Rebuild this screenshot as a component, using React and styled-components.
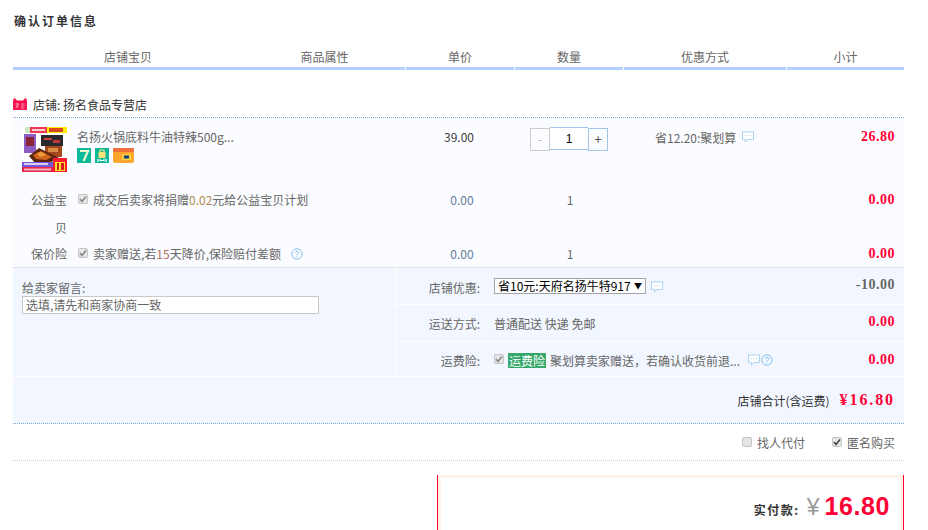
import React from 'react'
import styled, { createGlobalStyle } from 'styled-components'

const Global = createGlobalStyle`
  html, body { margin: 0; padding: 0; background: #fff; }
  body {
    font-family: "Noto Sans CJK SC", "Liberation Sans", sans-serif;
    font-size: 12px;
    color: #666;
    overflow: hidden;
  }
`

const Page = styled.div`
  width: 891px;
  height: 530px;
  margin-left: 13px;
  overflow: hidden;
`
const Title = styled.h2`
  margin: 0;
  height: 44px;
  padding: 13px 0 0 1px;
  box-sizing: border-box;
  font-size: 12px;
  line-height: 16px;
  letter-spacing: 2px;
  font-weight: 700;
  color: #333;
`
const Head = styled.div`
  display: grid;
  grid-template-columns: 227px 164px 108px 108px 162px 117px;
  column-gap: 1px;
  height: 26px;
`
const HeadCell = styled.div`
  text-align: center;
  height: 23px;
  padding-left: ${p => p.$shift || 0}px;
  line-height: 26px;
  font-size: 12px;
  color: #666;
  border-bottom: 3px solid #b2d1ff;
  margin-right: ${p => (p.$joined ? '-1px' : '0')};
`
const ShopRow = styled.div`
  display: flex;
  align-items: center;
  gap: 6px;
  height: 22px;
  margin-top: 23px;
  padding-bottom: 2px;
  border-bottom: 1px dotted #80a5dc;
  color: #333;
  font-size: 12px;
`
const ItemRow = styled.div`
  display: grid;
  grid-template-columns: 392px 108px 110px 162px 119px;
  height: 65px;
  background: #fbfcff;
`
const ItemMain = styled.div`
  display: flex;
  gap: 10px;
  padding: 9px 0 0 9px;
`
const ItemInfo = styled.div`
  display: flex;
  flex-direction: column;
  gap: 2px;
  padding-top: 1px;
`
const ItemName = styled.div`
  line-height: 18px;
  color: #666;
`
const Badges = styled.div`
  display: flex;
  gap: 4px;
`
const PriceCell = styled.div`
  text-align: center;
  padding-top: 10px;
  line-height: 18px;
  color: #3c3c3c;
`
const Stepper = styled.div`
  display: flex;
  justify-content: center;
  align-items: flex-start;
  padding: 9px 0 0 2px;
`
const StepBtn = styled.div`
  width: 20px;
  height: 23px;
  margin-top: 1px;
  box-sizing: border-box;
  border: 1px solid ${p => (p.$off ? '#ccc' : '#a0c4e8')};
  color: ${p => (p.$off ? '#bbb' : '#555')};
  text-align: center;
  line-height: 20px;
  font-size: 13px;
`
const StepValue = styled.div`
  width: 38px;
  height: 23px;
  box-sizing: border-box;
  border-top: 1px solid #a0c4e8;
  border-bottom: 1px solid #a0c4e8;
  background: #fff;
  color: #000;
  text-align: center;
  line-height: 22px;
  font-family: "Liberation Sans", sans-serif;
  font-size: 12px;
`
const PromoCell = styled.div`
  display: flex;
  align-items: center;
  gap: 6px;
  height: 18px;
  margin-top: 10px;
  padding-left: 32px;
`
const Amount = styled.div`
  font-family: "Liberation Serif", serif;
  font-weight: 700;
  font-size: 14px;
  letter-spacing: 0.5px;
  line-height: 18px;
  text-align: right;
  padding: ${p => p.$pad ?? 10}px 9px 0 0;
  color: ${p => p.$color || '#ff0036'};
`
const ExtraRows = styled.div`
  background: #fbfcff;
  height: 84px;
  padding-top: 3px;
  box-sizing: border-box;
`
const ExtraRow = styled.div`
  display: grid;
  grid-template-columns: 392px 108px 110px 281px;
  height: ${p => p.$height}px;
  line-height: 28px;
`
const ExtraMain = styled.div`
  display: grid;
  grid-template-columns: 54px 1fr;
  column-gap: 11px;
`
const ExtraLabel = styled.div`
  text-align: right;
  color: #666;
  line-height: 28px;
  padding-left: 16px;
`
const ExtraText = styled.div`
  display: flex;
  align-items: center;
  height: 28px;
  gap: 5px;
`
const ExtraNumber = styled.div`
  text-align: center;
  padding-left: ${p => p.$shift || 0}px;
  color: ${p => p.$color || '#5f7a99'};
`
const Accent = styled.span`
  color: ${p => p.$color};
`
const Panel = styled.div`
  display: grid;
  grid-template-columns: 383px 1fr;
  height: 109px;
  border-top: 1px dotted #ccc;
  background: #f2f7ff;
`
const MessageBox = styled.div`
  padding: 12px 0 0 9px;
  border-right: 1px solid #fff;
  border-bottom: 1px solid #fff;
`
const MessageLabel = styled.div`
  line-height: 16px;
  color: #666;
`
const MessageInput = styled.div`
  width: 297px;
  height: 18px;
  box-sizing: border-box;
  border: 1px solid #c8c8c8;
  background: #fff;
  line-height: 16px;
  padding-left: 3px;
  color: #666;
`
const OptionRow = styled.div`
  display: grid;
  grid-template-columns: 84px 1fr auto;
  column-gap: 14px;
  height: 37px;
  box-sizing: border-box;
  padding-top: ${p => p.$top ?? 1}px;
  align-items: center;
  border-bottom: 1px solid #fff;
  &:last-child { height: 35px; }
`
const OptionLabel = styled.div`
  text-align: right;
  color: #666;
`
const OptionValue = styled.div`
  display: flex;
  align-items: center;
  gap: 4px;
  color: #666;
  white-space: nowrap;
`
const OptionAmount = styled(Amount)`
  padding: 0 9px ${p => p.$bottom ?? 3}px 0;
`
const SelectWrap = styled.div`
  position: relative;
  display: inline-block;
  margin: 0 1px 2px 0;
  line-height: 0;
`
const CouponSelect = styled.select`
  appearance: none;
  width: 152px;
  height: 16px;
  box-sizing: border-box;
  margin: 0;
  padding: 0 0 0 3px;
  border: 1px solid #a5a5a5;
  border-radius: 0;
  background: #fff;
  color: #000;
  font: 12px/14px "Noto Sans CJK SC", sans-serif;
`
const SelectArrow = styled.span`
  position: absolute;
  right: 4px;
  top: 1px;
  font-size: 8px;
  line-height: 13px;
  color: #000;
  pointer-events: none;
`
const GreenTag = styled.span`
  background: #35a86a;
  color: #fff;
  padding: 0 1px;
  line-height: 15px;
`
const TailIcons = styled.span`
  display: inline-flex;
  gap: 1px;
  margin-left: 4px;
`
const HelpGap = styled.span`
  display: inline-flex;
  margin-left: 5px;
`
const TotalRow = styled.div`
  display: flex;
  justify-content: flex-end;
  align-items: center;
  gap: 10px;
  height: 46px;
  padding-right: 9px;
  background: #f2f7ff;
  border-bottom: 1px dotted #80a5dc;
  color: #333;
`
const TotalPrice = styled.span`
  font-family: "Liberation Serif", serif;
  font-weight: 700;
  font-size: 16px;
  letter-spacing: 1.900px;
  color: #ff0036;
`
const Extras = styled.div`
  display: flex;
  justify-content: flex-end;
  align-items: center;
  gap: 27px;
  height: 36px;
  padding-right: 9px;
  border-bottom: 1px dotted #ccc;
`
const CheckItem = styled.label`
  display: flex;
  align-items: center;
  gap: 5px;
  color: #666;
`
const Box = styled.span`
  display: inline-flex;
  align-items: center;
  justify-content: center;
  width: 10px;
  height: 10px;
  box-sizing: border-box;
  flex: none;
  margin-bottom: ${p => p.$lift || 0}px;
  border: 1px solid #c4c4c4;
  border-radius: 2px;
  background: #e6e6e6;
`
const PayBox = styled.div`
  display: flex;
  justify-content: flex-end;
  align-items: baseline;
  width: 467px;
  height: 60px;
  box-sizing: border-box;
  margin: 14px 0 0 424px;
  padding: 19px 13px 0 0;
  border-left: 1px solid #ff0036;
  border-right: 1px solid #ff0036;
  box-shadow: inset 3px 3px 0 #fff0e8, inset -3px 0 0 #fff0e8;
`
const PayLabel = styled.span`
  font-weight: 700;
  font-size: 12px;
  letter-spacing: 1.500px;
  margin-right: 7px;
  color: #333;
`
const Yen = styled.span`
  font-size: 23px;
  line-height: 24px;
  margin-right: 5px;
  color: #999;
  font-family: "Liberation Sans", sans-serif;
`
const PayValue = styled.span`
  font-family: "Liberation Sans", sans-serif;
  font-weight: 700;
  font-size: 25px;
  line-height: 24px;
  letter-spacing: 0.6px;
  color: #ff0036;
`

const Check = ({ dark }) => (
  <svg width="8" height="8" viewBox="0 0 8 8">
    <path d="M1 4 L3 6.500 L7 1.500" fill="none" stroke={dark ? '#444' : '#888'} strokeWidth="1.600" />
  </svg>
)

const Chat = () => (
  <svg width="12" height="12" viewBox="0 0 12 12" style={{ flex: 'none' }}>
    <path d="M.5.900h11v7.600H6L3.400 11V8.500H.5z" fill="#fff" stroke="#a9d2f2" />
    <path d="M3 4.700h1M5.500 4.700h1M8 4.700h1" stroke="#a9d2f2" />
  </svg>
)

const Help = () => (
  <svg width="12" height="12" viewBox="0 0 12 12" style={{ flex: 'none' }}>
    <circle cx="6" cy="6" r="5.200" fill="none" stroke="#85bfee" />
    <path d="M4.300 4.600C4.500 2.900 7.800 3 7.800 4.700 7.800 5.900 6 5.900 6 7.300M6 8.300v1" fill="none" stroke="#85bfee" />
  </svg>
)

const TmallIcon = () => (
  <svg width="14" height="12" viewBox="0 0 14 12">
    <path d="M0 3C0 1.500 .8.500 1.800 0L4 2.500H10L12.200 0C13.200.5 14 1.500 14 3V12H0Z" fill="#f5134f" />
    <path d="M2.500 6h3.500M4.200 5v5M2.500 9.500l3-2M8 6h3.500M8 8h3.500M8 10h3.500" stroke="#ffb3c6" strokeWidth=".8" fill="none" />
  </svg>
)

const Thumb = () => (
  <svg width="45" height="45" viewBox="0 0 45 45" style={{ flex: 'none' }}>
    <rect width="45" height="45" fill="#fff" />
    <rect x="3" width="5" height="6" fill="#cfe8c0" />
    <rect x="8" y="0" width="17" height="6" fill="#ee3a52" />
    <rect x="10" y="2" width="13" height="2" fill="#ffd0d4" />
    <rect x="25" width="20" height="6" fill="#ffee00" />
    <rect x="27" y="1" width="14" height="4" fill="#d84a20" />
    <rect x="2" y="7" width="12" height="19" fill="#8e5cc4" />
    <rect x="4" y="10" width="8" height="9" fill="#8a2436" />
    <rect x="19" y="8" width="22" height="11" fill="#2a2a2e" />
    <rect x="22" y="11" width="8" height="2" fill="#d04040" />
    <rect x="31" y="13" width="7" height="3" fill="#c03838" />
    <rect x="23" y="19" width="17" height="11" fill="#a4481e" />
    <rect x="26" y="21" width="10" height="4" fill="#d98a44" />
    <path d="M7 29L17 21L29 27L37 31L27 36H13Z" fill="#5a2410" />
    <path d="M11 28L19 24L30 30L24 33L14 32Z" fill="#d0641c" />
    <path d="M15 26L20 25L24 28L18 30Z" fill="#eda03c" />
    <rect y="35" width="31" height="5" fill="#7656d8" />
    <rect x="2" y="36" width="24" height="2" fill="#d8cef8" />
    <rect y="40" width="31" height="5" fill="#e6244c" />
    <rect x="2" y="41.500" width="27" height="2" fill="#f7b4c0" />
    <rect x="31" y="31" width="14" height="14" fill="#ff1a30" />
    <rect x="33" y="35" width="10" height="9" fill="#ffe22a" />
    <rect x="35" y="36" width="2" height="7" fill="#d02020" />
    <rect x="39" y="36" width="3" height="7" fill="#d02020" />
  </svg>
)

const BadgeSeven = () => (
  <svg width="14" height="15" viewBox="0 0 14 15">
    <rect width="14" height="15" fill="#0cb89a" />
    <path d="M3 3H11L6.500 13" fill="none" stroke="#e4f8c8" strokeWidth="2.200" />
  </svg>
)

const BadgeBag = () => (
  <svg width="14" height="15" viewBox="0 0 14 15">
    <rect width="14" height="15" fill="#0cb89a" />
    <rect x="3.500" y="4" width="7" height="6" rx="1" fill="#f5e27a" />
    <path d="M5 4V2H9V4" fill="none" stroke="#f5e27a" strokeWidth="1.200" />
    <path d="M3 11V14M5 11V12.500H9V11M11 11V14" fill="none" stroke="#fff" strokeWidth="1.200" />
  </svg>
)

const BadgeCard = () => (
  <svg width="21" height="15" viewBox="0 0 21 15">
    <rect width="21" height="15" rx="2" fill="#ffa530" />
    <rect width="21" height="4" rx="1" fill="#f0703c" />
    <rect x="9" y="6" width="9" height="6" fill="#f7d23e" />
    <rect x="11" y="7.500" width="5" height="3" fill="#123a7c" />
  </svg>
)

const App = () => (
  <Page>
    <Global />
    <Title>确认订单信息</Title>
    <Head>
      <HeadCell $joined $shift={2}>店铺宝贝</HeadCell>
      <HeadCell $shift={3}>商品属性</HeadCell>
      <HeadCell>单价</HeadCell>
      <HeadCell>数量</HeadCell>
      <HeadCell>优惠方式</HeadCell>
      <HeadCell>小计</HeadCell>
    </Head>
    <ShopRow><TmallIcon />店铺: 扬名食品专营店</ShopRow>
    <ItemRow>
      <ItemMain>
        <Thumb />
        <ItemInfo>
          <ItemName>名扬火锅底料牛油特辣500g...</ItemName>
          <Badges><BadgeSeven /><BadgeBag /><BadgeCard /></Badges>
        </ItemInfo>
      </ItemMain>
      <PriceCell>39.00</PriceCell>
      <Stepper>
        <StepBtn $off>-</StepBtn>
        <StepValue>1</StepValue>
        <StepBtn>+</StepBtn>
      </Stepper>
      <PromoCell>省12.20:聚划算 <Chat /></PromoCell>
      <Amount>26.80</Amount>
    </ItemRow>
    <ExtraRows>
      <ExtraRow $height={54}>
        <ExtraMain>
          <ExtraLabel>公益宝贝</ExtraLabel>
          <ExtraText>
            <Box $lift={3}><Check /></Box>
            <span>成交后卖家将捐赠<Accent $color="#b08a50">0.02</Accent>元给公益宝贝计划</span>
          </ExtraText>
        </ExtraMain>
        <ExtraNumber $shift={6}>0.00</ExtraNumber>
        <ExtraNumber $shift={4} $color="#666">1</ExtraNumber>
        <Amount $pad={5}>0.00</Amount>
      </ExtraRow>
      <ExtraRow $height={27}>
        <ExtraMain>
          <ExtraLabel>保价险</ExtraLabel>
          <ExtraText>
            <Box $lift={3}><Check /></Box>
            <span>卖家赠送,若<Accent $color="#b0705a">15</Accent>天降价,保险赔付差额</span>
            <HelpGap><Help /></HelpGap>
          </ExtraText>
        </ExtraMain>
        <ExtraNumber $shift={6}>0.00</ExtraNumber>
        <ExtraNumber $shift={4} $color="#666">1</ExtraNumber>
        <Amount $pad={5}>0.00</Amount>
      </ExtraRow>
    </ExtraRows>
    <Panel>
      <MessageBox>
        <MessageLabel>给卖家留言:</MessageLabel>
        <MessageInput>选填,请先和商家协商一致</MessageInput>
      </MessageBox>
      <div>
        <OptionRow $top={2}>
          <OptionLabel>店铺优惠:</OptionLabel>
          <OptionValue>
            <SelectWrap>
              <CouponSelect defaultValue="a">
                <option value="a">省10元:天府名扬牛特917</option>
              </CouponSelect>
              <SelectArrow>▼</SelectArrow>
            </SelectWrap>
            <Chat />
          </OptionValue>
          <OptionAmount $color="#666" $bottom={4}>-10.00</OptionAmount>
        </OptionRow>
        <OptionRow>
          <OptionLabel>运送方式:</OptionLabel>
          <OptionValue>普通配送 快递 免邮</OptionValue>
          <OptionAmount>0.00</OptionAmount>
        </OptionRow>
        <OptionRow $top={2}>
          <OptionLabel>运费险:</OptionLabel>
          <OptionValue>
            <Box $lift={3}><Check /></Box>
            <GreenTag>运费险</GreenTag>
            <span>聚划算卖家赠送，若确认收货前退...</span>
            <TailIcons><Chat /><Help /></TailIcons>
          </OptionValue>
          <OptionAmount $bottom={1}>0.00</OptionAmount>
        </OptionRow>
      </div>
    </Panel>
    <TotalRow>店铺合计(含运费) <TotalPrice>¥16.80</TotalPrice></TotalRow>
    <Extras>
      <CheckItem><Box />找人代付</CheckItem>
      <CheckItem><Box><Check dark /></Box>匿名购买</CheckItem>
    </Extras>
    <PayBox>
      <PayLabel>实付款:</PayLabel>
      <Yen>¥</Yen>
      <PayValue>16.80</PayValue>
    </PayBox>
  </Page>
)

export default App
